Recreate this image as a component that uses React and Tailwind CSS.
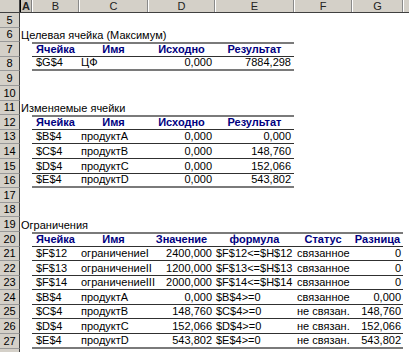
import React from "react";

/* ---------- Sheet layout ---------- */
const COLS = [
  { k: "A", w: "w-[12px]" },
  { k: "B", w: "w-[47px]" },
  { k: "C", w: "w-[69px]" },
  { k: "D", w: "w-[67px]" },
  { k: "E", w: "w-[79px]" },
  { k: "F", w: "w-[58px]" },
  { k: "G", w: "w-[51px]" },
];

const ALIGN = {
  l: "justify-start",
  r: "justify-end",
  c: "justify-center",
};

/* per-column cell setup for the report tables */
const T_SHORT = [
  { w: "w-[47px]", a: "l", p: "pl-[4px]" },
  { w: "w-[69px]", a: "l", p: "pl-[2px]" },
  { w: "w-[67px]", a: "r", p: "pr-[3px]" },
  { w: "w-[79px]", a: "r", p: "pr-[3px]" },
];

const T_LONG = [
  { w: "w-[47px]", a: "l", p: "pl-[4px]" },
  { w: "w-[69px]", a: "l", p: "pl-[2px]" },
  { w: "w-[67px]", a: "r", p: "pr-[3px]" },
  { w: "w-[79px]", a: "l", p: "pl-[1px]" },
  { w: "w-[58px]", a: "l", p: "pl-[3px]" },
  { w: "w-[51px]", a: "r", p: "pr-[2px]" },
];

const ROWS = [
  { n: 5 },
  { n: 6, title: "Целевая ячейка (Максимум)" },
  { n: 7, head: ["Ячейка", "Имя", "Исходно", "Результат"], t: T_SHORT },
  { n: 8, cells: ["$G$4", "ЦФ", "0,000", "7884,298"], t: T_SHORT, last: true },
  { n: 9 },
  { n: 10 },
  { n: 11, title: "Изменяемые ячейки" },
  { n: 12, head: ["Ячейка", "Имя", "Исходно", "Результат"], t: T_SHORT },
  { n: 13, cells: ["$B$4", "продуктA", "0,000", "0,000"], t: T_SHORT },
  { n: 14, cells: ["$C$4", "продуктB", "0,000", "148,760"], t: T_SHORT },
  { n: 15, cells: ["$D$4", "продуктC", "0,000", "152,066"], t: T_SHORT },
  { n: 16, cells: ["$E$4", "продуктD", "0,000", "543,802"], t: T_SHORT, last: true },
  { n: 17 },
  { n: 18 },
  { n: 19, title: "Ограничения" },
  { n: 20, head: ["Ячейка", "Имя", "Значение", "формула", "Статус", "Разница"], t: T_LONG },
  { n: 21, cells: ["$F$12", "ограничениеI", "2400,000", "$F$12<=$H$12", "связанное", "0"], t: T_LONG },
  { n: 22, cells: ["$F$13", "ограничениеII", "1200,000", "$F$13<=$H$13", "связанное", "0"], t: T_LONG },
  { n: 23, cells: ["$F$14", "ограничениеIII", "2000,000", "$F$14<=$H$14", "связанное", "0"], t: T_LONG },
  { n: 24, cells: ["$B$4", "продуктA", "0,000", "$B$4>=0", "связанное", "0,000"], t: T_LONG },
  { n: 25, cells: ["$C$4", "продуктB", "148,760", "$C$4>=0", "не связан.", "148,760"], t: T_LONG },
  { n: 26, cells: ["$D$4", "продуктC", "152,066", "$D$4>=0", "не связан.", "152,066"], t: T_LONG },
  { n: 27, cells: ["$E$4", "продуктD", "543,802", "$E$4>=0", "не связан.", "543,802"], t: T_LONG, last: true },
  { n: 28, hidden: true },
];

function RowHead({ n, hidden }) {
  return (
    <div className="w-[20px] shrink-0 h-full bg-[#d4d0c8] border-r border-r-[#404040] border-b border-b-[#9a9a9a] flex items-end justify-center pb-[1px] text-black">
      {hidden ? "" : n}
    </div>
  );
}

function TableRow({ row }) {
  const isHead = !!row.head;
  const values = row.head || row.cells;
  const border = isHead
    ? "border-t-2 border-t-[#7a7a7a] border-b border-b-[#303030]"
    : row.last
    ? "border-b-2 border-b-[#7a7a7a]"
    : "border-b border-b-[#303030]";

  return (
    <div className={`flex h-full ${border}`}>
      {values.map((v, i) => {
        const col = row.t[i];
        return (
          <div
            key={i}
            className={`${col.w} shrink-0 flex items-end whitespace-nowrap pb-[1px] ${
              isHead ? "justify-center font-bold text-[#000080]" : `${ALIGN[col.a]} ${col.p} text-black`
            }`}
          >
            {v}
          </div>
        );
      })}
    </div>
  );
}

export default function App() {
  return (
    <div className="w-[409px] h-[352px] overflow-hidden bg-white font-['Liberation_Sans',Arial,sans-serif] text-[11px] leading-[12px] select-none">
      {/* column header */}
      <div className="flex h-[13px] bg-[#d4d0c8] border-b border-b-[#404040]">
        <div className="w-[20px] shrink-0 border-r border-r-[#404040]" />
        {COLS.map((c) => (
          <div
            key={c.k}
            className={`${c.w} shrink-0 flex items-center justify-center border-r ${
              c.k === "A"
                ? "border-r-[#808080] border-l border-l-black bg-[#c8c4bc] font-bold"
                : "border-r-[#8a8a8a] border-l border-l-white"
            } text-[#222]`}
          >
            {c.k}
          </div>
        ))}
        <div className="flex-1 border-l border-l-white" />
      </div>

      {/* rows */}
      {ROWS.map((row) => (
        <div key={row.n} className="flex h-[14.6px]">
          <RowHead n={row.n} hidden={row.hidden} />
          <div className="w-[12px] shrink-0 flex items-end pl-[1px] pb-[1px] whitespace-nowrap overflow-visible text-black">
            {row.title || ""}
          </div>
          {(row.head || row.cells) && <TableRow row={row} />}
        </div>
      ))}
    </div>
  );
}
